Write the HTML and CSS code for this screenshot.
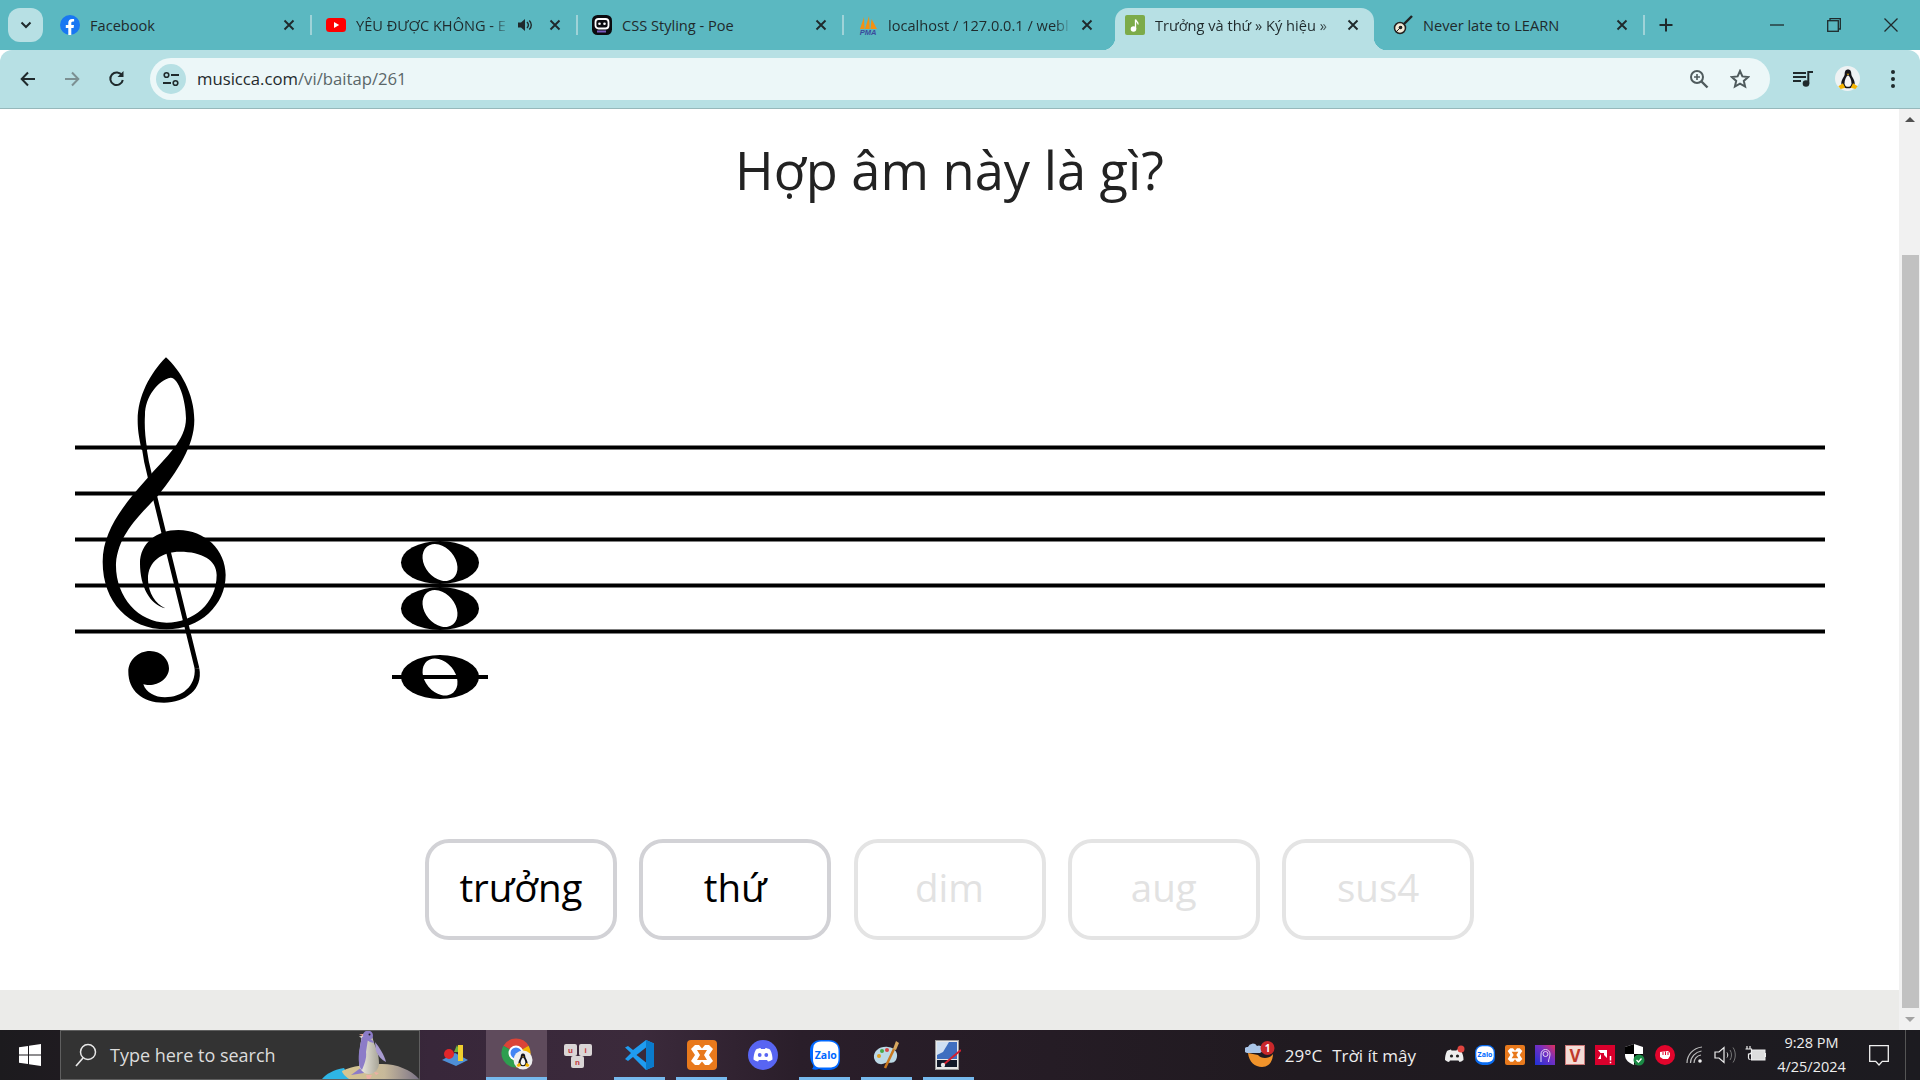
FILE: index.html
```html
<!DOCTYPE html>
<html lang="vi">
  <head>
    <meta charset="UTF-8" />
    <meta name="viewport" content="width=device-width, initial-scale=1.0" />
    <title>Trưởng và thứ » Ký hiệu » Hợp âm</title>
    <link rel="stylesheet" href="styles.css">
  </head>
  <body>
    <svg class="defs" width="0" height="0">
      <symbol id="close" viewBox="0 0 12 12"><path d="M1.500 1.500l9 9M10.500 1.500l-9 9" stroke="#1f2a2c" stroke-width="1.900" fill="none"/></symbol>
      <symbol id="tux" viewBox="0 0 24 24">
        <path d="M12 1.500c-3 0-3.600 2.600-3.600 5 0 2.500-3.700 6-3.700 10 0 3 3 5.500 7.300 5.500s7.300-2.500 7.300-5.500c0-4-3.700-7.500-3.700-10 0-2.400-.6-5-3.600-5z" fill="#15151a"/>
        <path d="M12 8c-2 1.500-3.800 5-3.800 8.500 0 2.500 1.800 4 3.800 4s3.800-1.500 3.800-4C15.800 13 14 9.500 12 8z" fill="#f4f4f4"/>
        <path d="M10.500 6.300h3l-1.500 1.700z" fill="#f5b400"/>
        <path d="M1.500 20l5-3.500 2.500 5-5 1.500zM22.500 20l-5-3.500-2.500 5 5 1.500z" fill="#f5b400"/>
      </symbol>
    </svg>

    <!-- Tabs -->
    <div class="tabstrip">
      <button class="tab-toggle"><svg width="12" height="8" viewBox="0 0 12 8"><path d="M1.500 1.500L6 6l4.500-4.500" stroke="#1f2a2c" stroke-width="2" fill="none"/></svg></button>

      <div class="tab">
        <svg class="favicon" viewBox="0 0 20 20"><circle cx="10" cy="10" r="10" fill="#1877f2"/><path d="M8.300 20v-7H5.800v-3h2.500V7.800c0-2.500 1.500-3.900 3.700-3.900 1.100 0 2.100.2 2.100.2v2.500h-1.200c-1.200 0-1.600.8-1.600 1.500V10h2.700l-.4 3h-2.300v7z" fill="#fff"/></svg>
        <span class="tab-title">Facebook</span>
        <svg class="tab-close"><use href="#close"/></svg>
      </div>
      <i class="sep"></i>

      <div class="tab">
        <svg class="favicon" viewBox="0 0 20 20"><rect y="3" width="20" height="14" rx="3.500" fill="#f00"/><path d="M8 7l5.200 3L8 13z" fill="#fff"/></svg>
        <span class="tab-title fade">YÊU ĐƯỢC KHÔNG - E</span>
        <svg class="mute" width="16" height="16" viewBox="0 0 16 16"><path d="M1 5.500h3L8 2v12l-4-3.500H1z" fill="#1f2a2c"/><path d="M10 5c1 1 1.400 2 1.400 3s-.4 2-1.400 3M12.300 3.500c1.300 1.300 2 2.800 2 4.500s-.7 3.200-2 4.500" stroke="#1f2a2c" stroke-width="1.400" fill="none"/></svg>
        <svg class="tab-close"><use href="#close"/></svg>
      </div>
      <i class="sep"></i>

      <div class="tab">
        <svg class="favicon" viewBox="0 0 20 20"><rect width="20" height="20" rx="5.500" fill="#0b0b0f"/><rect x="3.500" y="4" width="13" height="9.500" rx="3" fill="none" stroke="#fff" stroke-width="1.800"/><circle cx="7.500" cy="8.700" r="1.300" fill="#fff"/><circle cx="12.500" cy="8.700" r="1.300" fill="#fff"/><path d="M5 16.500h9" stroke="#7a5cc0" stroke-width="2"/></svg>
        <span class="tab-title">CSS Styling - Poe</span>
        <svg class="tab-close"><use href="#close"/></svg>
      </div>
      <i class="sep"></i>

      <div class="tab">
        <svg class="favicon" viewBox="0 0 20 20"><path d="M2 14L6 2l.5 12zM7 14l4-13 .8 13zM12.500 14l1-10 5.500 10z" fill="#f29111"/><text x="10" y="19.500" class="pma">PMA</text></svg>
        <span class="tab-title fade">localhost / 127.0.0.1 / webl</span>
        <svg class="tab-close"><use href="#close"/></svg>
      </div>
      <i class="sep off"></i>

      <div class="tab active">
        <svg class="favicon" viewBox="0 0 20 20"><rect width="20" height="20" rx="2" fill="#7cab49"/><circle cx="8.500" cy="14" r="2.800" fill="#fff"/><path d="M10.500 14V4.500c.5 2 3 2.500 2.500 5" stroke="#fff" stroke-width="1.300" fill="none"/></svg>
        <span class="tab-title fade">Trưởng và thứ » Ký hiệu »</span>
        <svg class="tab-close"><use href="#close"/></svg>
      </div>
      <i class="sep off"></i>

      <div class="tab">
        <svg class="favicon" viewBox="0 0 20 20"><path d="M19 1l-8 8" stroke="#222" stroke-width="2.400"/><circle cx="7" cy="13" r="5.500" fill="#f3ead6" stroke="#222" stroke-width="1.500"/><circle cx="7.500" cy="12.500" r="1.800" fill="#222"/><path d="M3 17l6-6" stroke="#222" stroke-width="1"/></svg>
        <span class="tab-title">Never late to LEARN</span>
        <svg class="tab-close"><use href="#close"/></svg>
      </div>
      <i class="sep"></i>

      <svg class="new-tab" width="14" height="14" viewBox="0 0 14 14"><path d="M7 .5v13M.5 7h13" stroke="#1f2a2c" stroke-width="2"/></svg>

      <div class="win-controls">
        <span><svg width="14" height="2" viewBox="0 0 14 2"><path d="M0 1h14" stroke="#1f2a2c" stroke-width="1.300"/></svg></span>
        <span><svg width="14" height="14" viewBox="0 0 14 14"><rect x=".7" y="2.700" width="10.600" height="10.600" fill="none" stroke="#1f2a2c" stroke-width="1.300"/><path d="M3 2.700V.7h10.300V11h-2" fill="none" stroke="#1f2a2c" stroke-width="1.300"/></svg></span>
        <span><svg width="14" height="14" viewBox="0 0 14 14"><path d="M.5.500l13 13M13.500.5l-13 13" stroke="#1f2a2c" stroke-width="1.300"/></svg></span>
      </div>
    </div>

    <!-- Toolbar -->
    <div class="toolbar">
      <div class="nav-btn"><svg width="16" height="16" viewBox="0 0 16 16"><path d="M15 8H2M8 1.500L1.700 8 8 14.500" stroke="#1f2a2c" stroke-width="2" fill="none"/></svg></div>
      <div class="nav-btn"><svg width="16" height="16" viewBox="0 0 16 16"><path d="M1 8h13M8 1.500L14.300 8 8 14.500" stroke="#7c9092" stroke-width="2" fill="none"/></svg></div>
      <div class="nav-btn"><svg width="17" height="17" viewBox="0 0 17 17"><path d="M14 5.500A6.300 6.300 0 1 0 14.800 10" stroke="#1f2a2c" stroke-width="2" fill="none"/><path d="M15.500 1v6h-6z" fill="#1f2a2c"/></svg></div>

      <div class="omnibox">
        <span class="site-info"><svg width="18" height="16" viewBox="0 0 18 16"><circle cx="4.500" cy="4" r="2.300" fill="none" stroke="#1f2a2c" stroke-width="1.600"/><path d="M9 4h8M1 12h8" stroke="#1f2a2c" stroke-width="1.800"/><circle cx="13.500" cy="12" r="2.300" fill="none" stroke="#1f2a2c" stroke-width="1.600"/></svg></span>
        <span class="url">musicca.com<span class="url-path">/vi/baitap/261</span></span>
        <svg class="omni-icon" width="20" height="20" viewBox="0 0 20 20"><circle cx="8" cy="8" r="6" fill="none" stroke="#4f5b5d" stroke-width="2"/><path d="M5 8h6M8 5v6" stroke="#4f5b5d" stroke-width="1.600"/><path d="M12.500 12.500l6 6" stroke="#4f5b5d" stroke-width="2.400"/></svg>
        <svg class="omni-icon star" width="20" height="20" viewBox="0 0 20 20"><path d="M10 2l2.400 5.400 5.800.6-4.400 3.900 1.300 5.700L10 14.700l-5.100 2.900 1.300-5.700L1.800 8l5.800-.6z" fill="none" stroke="#4f5b5d" stroke-width="2"/></svg>
      </div>

      <div class="tool-icons">
        <svg width="20" height="16" viewBox="0 0 20 16"><path d="M0 2h13M0 6h13M0 10h8" stroke="#1f2a2c" stroke-width="2"/><circle cx="13" cy="12.500" r="3.300" fill="#1f2a2c"/><path d="M15.300 12.500V1H20" stroke="#1f2a2c" stroke-width="2" fill="none"/></svg>
        <span class="avatar"><svg width="22" height="22"><use href="#tux"/></svg></span>
        <svg width="4" height="18" viewBox="0 0 4 18"><circle cx="2" cy="2" r="2" fill="#1f2a2c"/><circle cx="2" cy="9" r="2" fill="#1f2a2c"/><circle cx="2" cy="16" r="2" fill="#1f2a2c"/></svg>
      </div>
    </div>

    <!-- Page -->
    <div class="viewport">
      <main class="page">
        <h1>Hợp âm này là gì?</h1>

        <svg class="staff" width="1899" height="400" viewBox="0 330 1899 400">
          <g fill="#000">
            <rect x="75" y="445.500" width="1750" height="4"/>
            <rect x="75" y="491.500" width="1750" height="4"/>
            <rect x="75" y="537.500" width="1750" height="4"/>
            <rect x="75" y="583.500" width="1750" height="4"/>
            <rect x="75" y="629.500" width="1750" height="4"/>
          </g>
          <!-- treble clef -->
          <g transform="translate(60 340) scale(.3333)">
            <path d="M318 52C360 90 403 160 403 240C403 320 350 395 296 465C245 520 175 580 168 670C165 770 235 848 320 848C400 848 470 790 470 705C470 660 425 635 360 635C305 635 262 665 264 720C266 760 285 790 316 805C270 795 240 740 240 670C240 610 290 570 355 570C435 570 497 630 497 705C497 795 420 868 320 868C205 868 128 785 128 665C128 570 195 490 262 415C320 350 378 300 378 235C378 180 355 112 332 113C295 120 255 170 255 225C253 255 255 290 262 330L245 330C236 290 233 265 233 240C233 170 270 100 318 52Z"/>
            <path d="M252 320C256 350 262 380 270 410L411 985" fill="none" stroke="#000" stroke-width="14"/>
            <path d="M205 995C205 960 235 933 270 933C305 933 327 960 327 985C327 1015 295 1038 262 1035L250 1033C258 1058 285 1072 315 1072C365 1072 408 1040 404 985L418 985C430 1050 375 1088 312 1088C245 1088 205 1050 205 995Z"/>
          </g>
          <!-- chord -->
          <g>
            <ellipse cx="440" cy="562.500" rx="39" ry="21.500"/>
            <ellipse cx="440" cy="562.500" rx="20.500" ry="15" transform="rotate(50 440 562.500)" fill="#fff"/>
            <ellipse cx="440" cy="608.500" rx="39" ry="21.500"/>
            <ellipse cx="440" cy="608.500" rx="20.500" ry="15" transform="rotate(50 440 608.500)" fill="#fff"/>
            <ellipse cx="440" cy="677" rx="39" ry="22"/>
            <ellipse cx="440" cy="677" rx="20.500" ry="15" transform="rotate(50 440 677)" fill="#fff"/>
            <rect x="392" y="675" width="96" height="4"/>
          </g>
        </svg>

        <div class="answers">
          <button class="answer">trưởng</button>
          <button class="answer">thứ</button>
          <button class="answer off">dim</button>
          <button class="answer off">aug</button>
          <button class="answer off">sus4</button>
        </div>

        <div class="page-footer"></div>
      </main>

      <div class="scrollbar">
        <div class="arrow"><i class="tri-up"></i></div>
        <div class="thumb"></div>
        <div class="arrow"><i class="tri-down"></i></div>
      </div>
    </div>

    <!-- Taskbar -->
    <footer class="taskbar">
      <div class="start"><svg width="22" height="22" viewBox="0 0 22 22"><path d="M0 3.200l9-1.300v8.500H0zM10 1.800L22 0v10.400H10zM0 11.500h9V20l-9-1.300zM10 11.500h12V22l-12-1.800z" fill="#fff"/></svg></div>

      <div class="search">
        <svg width="24" height="26" viewBox="0 0 24 26"><circle cx="14" cy="10" r="7.500" fill="none" stroke="#e8e8e8" stroke-width="1.500"/><path d="M9 16L2 24" stroke="#e8e8e8" stroke-width="1.700"/></svg>
        <span>Type here to search</span>
        <svg class="search-art" width="110" height="50" viewBox="0 0 110 50">
          <defs>
            <linearGradient id="hill" x1="0" y1="0" x2="1" y2="0"><stop offset="0" stop-color="#d9c68f"/><stop offset=".55" stop-color="#c7b99a"/><stop offset="1" stop-color="#7c7488"/></linearGradient>
            <linearGradient id="belly" x1="0" y1="0" x2="1" y2="0"><stop offset="0" stop-color="#f2f0e6"/><stop offset="1" stop-color="#a8a598"/></linearGradient>
          </defs>
          <path d="M13 50c4-5 11-9 22-11l6 11z" fill="#2eb6e6"/>
          <path d="M33 42c10-5 25-7 40-7 15 0 29 6 37 15H40c-4-3-7-6-7-8z" fill="url(#hill)"/>
          <path d="M42 46l11-8 2 6z" fill="#8c7cc8"/>
          <path d="M60 4c-3-1-6 0-7 3l-3 .5 2.500 1.500C51 18 50 25 50 34c0 6 4 11 10 11s10-5 10-11c0-9-3-15-5-20-1-4-2-9-5-10z" fill="url(#belly)"/>
          <path d="M53 8c-2 9-4 17-3 26 0 3 1 5 3 7 2-5 5-12 4-18l2-13c-2-2-4-3-6-2z" fill="#8c7cc8"/>
          <path d="M66 13c4 5 9 12 11 20-4-2-8-6-10-11z" fill="#a89bd0"/>
          <path d="M58 11c3-2 6 0 7 3l-4-1z" fill="#8c7cc8"/>
          <circle cx="59" cy="6.500" r="5" fill="#8c7cc8"/>
          <circle cx="60.500" cy="5.500" r="1" fill="#222"/>
          <path d="M54 5l-4 .5 4 1.500z" fill="#f0a89c"/>
          <path d="M57 46h6l-2 4h-3zM65 43l5 1-3 2z" fill="#eeb0a4"/>
        </svg>
      </div>

      <div class="apps">
        <div class="app"><svg width="30" height="30" viewBox="0 0 30 30"><path d="M2 20l13-7 13 7-12 6z" fill="#4e8fd6"/><circle cx="9" cy="14" r="5" fill="#e0262a"/><path d="M14 12l3-7 3 7z" fill="#6cb33f"/><rect x="18" y="5" width="5" height="16" fill="#f0cf2e"/></svg></div>
        <div class="app running"><svg width="32" height="32" viewBox="0 0 32 32"><path d="M15 15L2.440 7.750A14.500 14.500 0 0 1 27.560 7.750Z" fill="#db4437"/><path d="M15 15L27.560 7.750A14.500 14.500 0 0 1 15 29.500Z" fill="#f4b400"/><path d="M15 15L15 29.500A14.500 14.500 0 0 1 2.440 7.750Z" fill="#2e9e4f"/><circle cx="15" cy="15" r="7.500" fill="#fff"/><circle cx="15" cy="15" r="5.500" fill="#4285f4"/><circle cx="22" cy="22" r="9.500" fill="#eee"/><use href="#tux" x="14.500" y="14.500" width="15" height="15"/></svg></div>
        <div class="app"><svg width="30" height="28" viewBox="0 0 30 28"><g fill="#d9d5d5"><rect x="1" y="3" width="13" height="12" rx="2"/><rect x="16" y="3" width="13" height="12" rx="2"/><rect x="8" y="15" width="13" height="12" rx="2"/></g><text x="7.500" y="12" class="key">u</text><text x="22.500" y="12" class="key">i</text><text x="14.500" y="24" class="key">n</text></svg></div>
        <div class="app open"><svg width="30" height="30" viewBox="0 0 30 30"><path d="M21 0l8 3.500v23L21 30 8 17l-5 4-3-2 6-6-6-5.500L3 6l5 4z" fill="#1f9cf0"/><path d="M21 0v30l8-3.500v-23z" fill="#0a7bcc"/><path d="M21 7.500L11.500 15l9.500 7.500z" fill="#3a2a39"/></svg></div>
        <div class="app open"><svg width="30" height="30" viewBox="0 0 30 30"><rect width="30" height="30" rx="4" fill="#e8791c"/><path d="M8 5h4l3 3.500L18 5h4l4 4-4 6 4 6-4 4h-4l-3-3.500L12 25H8l-4-4 4-6-4-6z" fill="#fff"/><path d="M10 10h10l-3 5 3 5H10l3-5z" fill="#e8791c"/></svg></div>
        <div class="app"><svg width="30" height="30" viewBox="0 0 30 30"><circle cx="15" cy="15" r="15" fill="#5865f2"/><path d="M8 9.500c2-1 4-1.500 4.500-1.500l.5 1h4l.5-1c.5 0 2.500.5 4.500 1.500 2 3.500 2.500 7 2.500 10-1.500 1.200-3.500 2-4.500 2l-1-1.500H11l-1 1.500c-1 0-3-.8-4.500-2 0-3 .5-6.500 2.500-10z" fill="#fff"/><circle cx="11.700" cy="15" r="1.900" fill="#5865f2"/><circle cx="18.300" cy="15" r="1.900" fill="#5865f2"/></svg></div>
        <div class="app open"><svg width="30" height="30" viewBox="0 0 30 30"><path d="M11 0h8c7 0 11 4 11 11v8c0 7-4 11-11 11-4 0-8 0-10-1-2 1-5 1-7 0 1-1 2-3 1-4C1 22 0 19 0 15v-4C0 4 4 0 11 0z" fill="#0068ff"/><path d="M11 1.500h8c6 0 9.500 3.500 9.500 9.500v8c0 6-3.500 8.500-9.500 8.500H9C5 27 3 24 3 19v-8c0-6 2-9.500 8-9.500z" fill="#fff"/><text x="15.800" y="19" class="zalo">Zalo</text></svg></div>
        <div class="app open"><svg width="30" height="30" viewBox="0 0 30 30"><path d="M2 18C1 11 8 6 16 7c8 1 11 7 8 13-3 5-8 1-11 3s-9 2-11-5z" fill="#bcd9e6"/><circle cx="7" cy="16" r="2" fill="#e0a020"/><circle cx="10" cy="11" r="2" fill="#4aa84a"/><circle cx="15" cy="10" r="2" fill="#d64545"/><path d="M13 28l9-19" stroke="#c9781f" stroke-width="2.500"/><path d="M21 9l3-8 3 2-3 7z" fill="#d8a860"/></svg></div>
        <div class="app open"><svg width="26" height="30" viewBox="0 0 26 30"><rect x=".5" y=".5" width="23" height="29" fill="#e8e8e8" stroke="#999"/><rect x="2" y="2" width="20" height="17" fill="#3e6fc0"/><path d="M2 2h12l-6 10-6 3z" fill="#cfe0f2"/><rect x="2" y="20" width="20" height="7" fill="#101828"/><path d="M8 25L26 10" stroke="#d02030" stroke-width="2"/><circle cx="8" cy="25" r="2.200" fill="#e8e8e8"/></svg></div>
      </div>

      <div class="tray">
        <div class="weather">
          <svg width="32" height="30" viewBox="0 0 32 30"><path d="M3 13c1 9 7 14 14 14s11-6 11-13c-3 5-12 5-15 1z" fill="#f0932b"/><path d="M2 13a3 3 0 0 1 1-6 5 5 0 0 1 9-1 3.500 3.500 0 0 1 3 7z" fill="#a9c5e8"/><circle cx="22.500" cy="8" r="7" fill="#c8282b"/><text x="22.500" y="11.500" class="badge-num">1</text></svg>
          <span>29°C</span>
          <span>Trời ít mây</span>
        </div>
        <div class="tray-icons">
          <span><svg width="22" height="20" viewBox="0 0 22 20"><path d="M3 6c2-1 3.500-1.500 4-1.500l.5 1h5l.5-1c.5 0 2 .5 4 1.500 2 3 2.500 6 2.500 9-1.500 1-3 2-4 2l-1-1.500H6l-1 1.500c-1 0-2.500-1-4-2 0-3 .5-6 2-9z" fill="#eee"/><circle cx="7.500" cy="11" r="1.600" fill="#222"/><circle cx="13.500" cy="11" r="1.600" fill="#222"/><circle cx="17" cy="4" r="3.500" fill="#e0453f"/></svg></span>
          <span><svg width="20" height="20" viewBox="0 0 30 30"><rect width="30" height="30" rx="11" fill="#0a6cf0"/><rect x="2" y="2" width="26" height="24" rx="9" fill="#fff"/><text x="15" y="18" class="zalo">Zalo</text></svg></span>
          <span><svg width="20" height="20" viewBox="0 0 30 30"><rect width="30" height="30" rx="3" fill="#e8791c"/><path d="M8 5h4l3 3.500L18 5h4l4 4-4 6 4 6-4 4h-4l-3-3.500L12 25H8l-4-4 4-6-4-6z" fill="#fff"/><path d="M10 10h10l-3 5 3 5H10l3-5z" fill="#e8791c"/></svg></span>
          <span><svg width="20" height="20" viewBox="0 0 20 20"><defs><linearGradient id="proton" x1="0" y1="1" x2="1" y2="0"><stop offset="0" stop-color="#1c32d8"/><stop offset=".6" stop-color="#7a2fc0"/><stop offset="1" stop-color="#e0305a"/></linearGradient></defs><rect width="20" height="20" fill="url(#proton)"/><path d="M6 17V9a4.500 4.500 0 0 1 9 0c0 3-1.500 5-1.500 8" fill="none" stroke="#e4d8f4" stroke-width="1"/><circle cx="10.500" cy="9" r="2.500" fill="none" stroke="#e4d8f4"/></svg></span>
          <span class="vbox">V</span>
          <span><svg width="20" height="20" viewBox="0 0 20 20"><rect width="20" height="20" fill="#d9002c"/><path d="M3 5h9v8l-3-3V8H5.500zM3 14l3-5v5z" fill="#fff"/><path d="M15.500 11v4.500M15.500 16.800v1.500" stroke="#fff" stroke-width="1.500"/></svg></span>
          <span><svg width="22" height="24" viewBox="0 0 22 24"><path d="M10 1l9 3v8c0 5-4 8-9 10-5-2-9-5-9-10V4z" fill="#fff"/><path d="M10 1v10H1V4zM10 11h9c0 6-4 9-9 11z" fill="#000"/><circle cx="15" cy="17" r="5.500" fill="#1a8a44"/><path d="M12.500 17l2 2 3-3.500" stroke="#fff" stroke-width="1.300" fill="none"/></svg></span>
          <span><svg width="20" height="20" viewBox="0 0 20 20"><circle cx="10" cy="10" r="10" fill="#e2052c"/><path d="M5 7l8-1 2 2v3l-2 3H8l-3-2z" fill="#fff"/><path d="M8 7v3M10.500 6.500V10M13 7v3" stroke="#e2052c"/></svg></span>
          <span><svg width="18" height="18" viewBox="0 0 18 18"><path d="M1 17C1 9 7 2 16 1M4.500 17c0-6 5-11 11-12M8 17c0-4 3-7.500 7-8" fill="none" stroke="#bdbdbd" stroke-width="1.200"/><circle cx="14" cy="15" r="1.800" fill="#eee"/></svg></span>
          <span><svg width="22" height="20" viewBox="0 0 22 20"><path d="M1 7h4l5-4.500v15L5 13H1z" fill="none" stroke="#eee" stroke-width="1.200"/><path d="M13 7.500c1 1.500 1 3.500 0 5" stroke="#ddd" fill="none"/><path d="M16 5c2 3 2 7 0 10M19 2.500c3 4 3 11 0 15" stroke="#777" fill="none"/></svg></span>
          <span><svg width="22" height="18" viewBox="0 0 22 18"><path d="M3 0v3M6 0v3M1.500 3h6v3c0 2-3 2-3 2v4c0 1 1 1.500 2 1.500" stroke="#eee" stroke-width="1.200" fill="none"/><rect x="7.500" y="4" width="13.500" height="10" fill="#ddd" stroke="#eee"/><rect x="21" y="7" width="1" height="4" fill="#eee"/></svg></span>
        </div>
        <div class="clock"><span>9:28 PM</span><span>4/25/2024</span></div>
        <div class="notify"><svg width="20" height="21" viewBox="0 0 20 21"><path d="M.7.700h18.600v15.600h-6L10 20l-3.300-3.700h-6z" fill="none" stroke="#f0f0f0" stroke-width="1.300"/></svg></div>
        <i class="show-desktop"></i>
      </div>
    </footer>
  </body>
</html>
```

FILE: styles.css
```css
* {
  box-sizing: border-box;
}

html,
body {
  margin: 0;
  height: 100%;
  overflow: hidden;
}

body {
  display: flex;
  flex-direction: column;
  width: 1920px;
  height: 1080px;
  font-family: "Open Sans", "Noto Sans", sans-serif;
  color: #1f2a2c;
  background: #fff;
}

.defs {
  display: none;
}

/* tabs */
.tabstrip {
  display: flex;
  align-items: flex-start;
  height: 50px;
  padding: 8px 0 0 8px;
  background: #5bb8c1;
}

.tab-toggle {
  width: 35px;
  height: 34px;
  margin-right: 3px;
  padding: 0;
  border: 0;
  border-radius: 12px;
  background: #b7e0e4;
  display: flex;
  align-items: center;
  justify-content: center;
}

.tab {
  position: relative;
  display: flex;
  align-items: center;
  width: 264px;
  height: 42px;
  padding: 0 15px 8px 14px;
  font-size: 14.600px;
  white-space: nowrap;
}

.tab.active {
  width: 259px;
  margin: 0 3px 0 5px;
  padding-left: 10px;
  padding-right: 15px;
  background: #b7e0e4;
  border-radius: 13px 13px 0 0;
}

.tab.active::before,
.tab.active::after {
  content: "";
  position: absolute;
  bottom: 0;
  width: 13px;
  height: 13px;
}

.tab.active::before {
  left: -13px;
  background: radial-gradient(circle at 0 0, transparent 13px, #b7e0e4 13.500px);
}

.tab.active::after {
  right: -13px;
  background: radial-gradient(circle at 100% 0, transparent 13px, #b7e0e4 13.500px);
}

.favicon {
  flex: none;
  width: 20px;
  height: 20px;
  margin-right: 10px;
}

.tab-title {
  flex: 1;
  min-width: 0;
  overflow: hidden;
}

.tab-title.fade {
  -webkit-mask-image: linear-gradient(to right, #000 calc(100% - 16px), transparent);
  mask-image: linear-gradient(to right, #000 calc(100% - 16px), transparent);
}

.mute {
  flex: none;
  margin: 0 6px 0 8px;
}

.tab-close {
  flex: none;
  width: 12px;
  height: 12px;
  margin-left: 10px;
}

.sep {
  flex: none;
  width: 2px;
  height: 20px;
  margin-top: 7px;
  background: #9fd3d8;
}

.sep.off {
  visibility: hidden;
}

.new-tab {
  margin: 10px 0 0 14px;
}

.win-controls {
  display: flex;
  margin: -8px 0 0 auto;
  padding-right: 1px;
}

.win-controls span {
  display: flex;
  align-items: center;
  justify-content: center;
  width: 57px;
  height: 50px;
}

/* toolbar */
.toolbar {
  display: flex;
  align-items: center;
  height: 59px;
  padding: 0 0 1px 10px;
  background: #b7e0e4;
  border-bottom: 1px solid #96b8bb;
  border-radius: 12px 12px 0 0;
}

.nav-btn {
  display: flex;
  align-items: center;
  justify-content: center;
  width: 36px;
  margin-left: 8px;
}

.nav-btn:first-child {
  margin-left: 0;
}

.omnibox {
  display: flex;
  align-items: center;
  width: 1620px;
  height: 42px;
  margin-left: 16px;
  padding: 0 20px 0 6px;
  background: #ecf7f8;
  border-radius: 21px;
}

.site-info {
  display: flex;
  align-items: center;
  justify-content: center;
  width: 30px;
  height: 30px;
  margin-right: 11px;
  border-radius: 50%;
  background: #b7e0e4;
}

.url {
  flex: 1;
  font-size: 16.700px;
  color: #1f2a2c;
}

.url-path {
  color: #5a6668;
}

.omni-icon {
  margin-left: 21px;
}

.tool-icons {
  display: flex;
  align-items: center;
  margin-left: 23px;
}

.avatar {
  display: flex;
  align-items: center;
  justify-content: center;
  width: 25px;
  height: 25px;
  margin: 0 31px 0 22px;
  border-radius: 50%;
  background: #eef2f3;
}

/* page */
.viewport {
  flex: 1;
  display: flex;
  min-height: 0;
}

.page {
  flex: 1;
  display: flex;
  flex-direction: column;
  align-items: center;
  min-width: 0;
}

h1 {
  margin: 25px 0 124px;
  font-size: 52.400px;
  line-height: 72px;
  font-weight: 400;
  color: #222;
}

.staff {
  display: block;
  flex: none;
}

.answers {
  display: flex;
  gap: 22.300px;
  margin-top: 109px;
}

.answer {
  width: 192px;
  height: 101px;
  padding: 0 0 6px;
  font-family: inherit;
  font-size: 38.500px;
  color: #000;
  background: #fff;
  border: 4px solid #d2d2d6;
  border-radius: 24px;
}

.answer.off {
  color: #e2e2e2;
  border-color: #e4e4e4;
}

.page-footer {
  align-self: stretch;
  height: 40px;
  margin-top: auto;
  background: #ebebe9;
}

.scrollbar {
  flex: none;
  display: flex;
  flex-direction: column;
  justify-content: space-between;
  width: 21px;
  background: #f1f1f1;
}

.arrow {
  display: flex;
  align-items: center;
  justify-content: center;
  height: 21px;
}

.tri-up,
.tri-down {
  border-left: 5px solid transparent;
  border-right: 5px solid transparent;
}

.tri-up {
  border-bottom: 5px solid #505050;
}

.tri-down {
  border-top: 5px solid #a3a3a3;
}

.thumb {
  height: 753px;
  margin: 125px 1px auto 3px;
  background: #c1c1c1;
}

/* taskbar */
.taskbar {
  display: flex;
  height: 50px;
  color: #eee;
  background: linear-gradient(90deg, #1c1b1e 0, #1f1b20 60px, #38273a 430px, #3b2a3b 640px, #2a1e2a 800px, #201a20 1300px, #1c1b20 1920px);
}

.start {
  display: flex;
  align-items: center;
  justify-content: center;
  width: 60px;
}

.search {
  position: relative;
  display: flex;
  align-items: center;
  gap: 12px;
  width: 360px;
  padding-left: 13px;
  background: #333;
  border: 1px solid #5f5f5f;
  overflow: hidden;
  font-size: 18px;
  color: #dcdcdc;
}

.search-art {
  position: absolute;
  right: 0;
  bottom: 0;
}

.apps {
  display: flex;
  margin-left: 4px;
}

.app {
  display: flex;
  align-items: center;
  justify-content: center;
  width: 61.700px;
  height: 50px;
}

.app.running {
  background: #5f4b5c;
  border-bottom: 3px solid #76b9ed;
}

.app.open {
  background: linear-gradient(#76b9ed, #76b9ed) center bottom / 51px 3px no-repeat;
}

.tray {
  display: flex;
  align-items: center;
  margin-left: auto;
}

.weather {
  display: flex;
  align-items: center;
  gap: 10px;
  padding-right: 24px;
  font-size: 17px;
}

.weather svg {
  margin-right: -2px;
}

.tray-icons {
  display: flex;
  align-items: center;
}

.tray-icons span {
  display: flex;
  align-items: center;
  justify-content: center;
  width: 30px;
  height: 50px;
}

.tray-icons .vbox {
  width: 20px;
  height: 20px;
  margin: 0 5px;
  font-size: 17px;
  font-weight: 700;
  color: #c0392b;
  background: #f4dcd6;
  border: 1px solid #c77;
}

.clock {
  display: flex;
  flex-direction: column;
  align-items: center;
  gap: 4px;
  width: 83px;
  font-size: 14.500px;
  line-height: 20px;
}

.notify {
  display: flex;
  align-items: center;
  justify-content: center;
  width: 52px;
}

.show-desktop {
  width: 15px;
  height: 50px;
  border-left: 1px solid #555;
}

/* svg labels */
.pma {
  font: italic 700 7.500px "Liberation Sans", sans-serif;
  fill: #3a4a9c;
  text-anchor: middle;
}

.key {
  font: 700 8px "Liberation Sans", sans-serif;
  fill: #c2343a;
  text-anchor: middle;
}

.zalo {
  font: 700 10.500px "Open Sans", sans-serif;
  fill: #0068ff;
  text-anchor: middle;
}

.badge-num {
  font: 700 10px "Open Sans", sans-serif;
  fill: #fff;
  text-anchor: middle;
}
```
